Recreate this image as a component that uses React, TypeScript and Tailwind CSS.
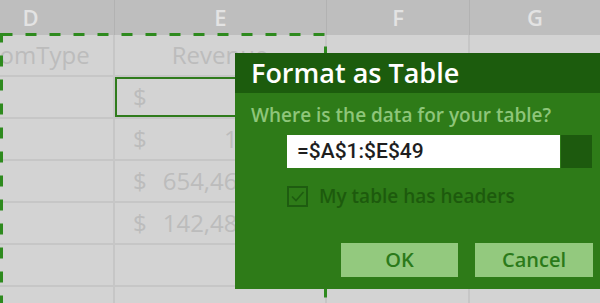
import React from 'react';

type Row = { d?: string; e?: string; num?: string; selected?: boolean };

const rows: Row[] = [
  { d: 'RoomType', e: 'Revenue' },
  { num: '950', selected: true },
  { num: '1,250' },
  { num: '654,460.00' },
  { num: '142,480.00' },
  {},
  {},
];

export default function App() {
  return (
    <div
      className="relative w-[600px] h-[303px] overflow-hidden bg-[#d3d3d3]"
      style={{ fontFamily: '"Open Sans", "Noto Sans", sans-serif' }}
    >
      <div className="-ml-[53px] w-[653px] flex flex-col">
        {/* column headers */}
        <div className="flex h-[35px] bg-[#bebebe] text-[#e3e3e3] text-[22px] font-semibold">
          <div className="w-[168px] flex items-center justify-center border-r border-[#b2b2b2]">D</div>
          <div className="w-[212px] flex items-center justify-center border-r border-[#b2b2b2]">E</div>
          <div className="w-[143px] flex items-center justify-center border-r border-[#b2b2b2]">F</div>
          <div className="w-[130px] flex items-center justify-center">G</div>
        </div>

        {rows.map((r, i) => (
          <div key={i} className="flex h-[42px] border-b-2 border-[#c6c6c6] text-[#bcbcbc] text-[24px]">
            <div className="w-[168px] flex items-center justify-center border-r-2 border-[#c6c6c6]">{r.d}</div>
            <div
              className={`w-[212px] flex items-center border-r-2 border-[#c6c6c6] ${
                r.selected ? 'ring-2 ring-inset ring-[#2f7b1c]' : ''
              } ${r.e ? 'justify-center' : 'justify-between pl-[18px] pr-[40px]'}`}
            >
              {r.e ? r.e : r.num ? (
                <>
                  <span>$</span>
                  <span>{r.num}</span>
                </>
              ) : null}
            </div>
            <div className="w-[143px] border-r-2 border-[#c6c6c6]" />
            <div className="w-[130px]" />
          </div>
        ))}
      </div>

      {/* copy selection marquee */}
      <svg className="absolute left-0 top-[33px]" width="330" height="280">
        <rect x="1.5" y="1.5" width="324" height="400" fill="none" stroke="#2e8a1e" strokeWidth="3" strokeDasharray="11 13" />
      </svg>

      {/* dialog */}
      <div className="absolute left-[235px] top-[53px] w-[365px] h-[236px] flex flex-col bg-[#2e7b18]">
        <div className="h-[40px] bg-[#1c5c0d] flex items-center pl-[16px] text-white text-[27px] font-semibold">
          Format as Table
        </div>
        <div className="flex flex-col">
          <div className="pl-[16px] pt-[7px] h-[42px] text-[#8ec67a] text-[19px] font-semibold leading-[30px]">
            Where is the data for your table?
          </div>
          <div className="flex ml-[52px] gap-[1px] h-[33px]">
            <div
              className="w-[273px] bg-white flex items-center pl-[10px] text-[21px] font-medium text-[#1e1e1e]"
              style={{ fontFamily: 'Roboto, sans-serif' }}
            >
              =$A$1:$E$49
            </div>
            <div className="w-[31px] bg-[#1d5a0e]" />
          </div>
          <div className="flex items-center ml-[52px] mt-[17px] gap-[11px] h-[22px]">
            <div className="w-[21px] h-[21px] border-2 border-[#1e5c10] flex items-center justify-center">
              <svg width="15" height="15" viewBox="0 0 15 15">
                <path d="M2 7.5 L6 11.5 L13.5 3" fill="none" stroke="#1e5c10" strokeWidth="1.6" />
              </svg>
            </div>
            <span className="text-[#1d5a0d] text-[19px] font-semibold">My table has headers</span>
          </div>
          <div className="flex justify-end gap-[17px] pr-[7px] mt-[36px]">
            <button className="w-[117px] h-[34px] bg-[#93c97e] text-[#2b7a1a] text-[20px] font-semibold">OK</button>
            <button className="w-[118px] h-[34px] bg-[#93c97e] text-[#2b7a1a] text-[20px] font-semibold">Cancel</button>
          </div>
        </div>
      </div>
    </div>
  );
}
